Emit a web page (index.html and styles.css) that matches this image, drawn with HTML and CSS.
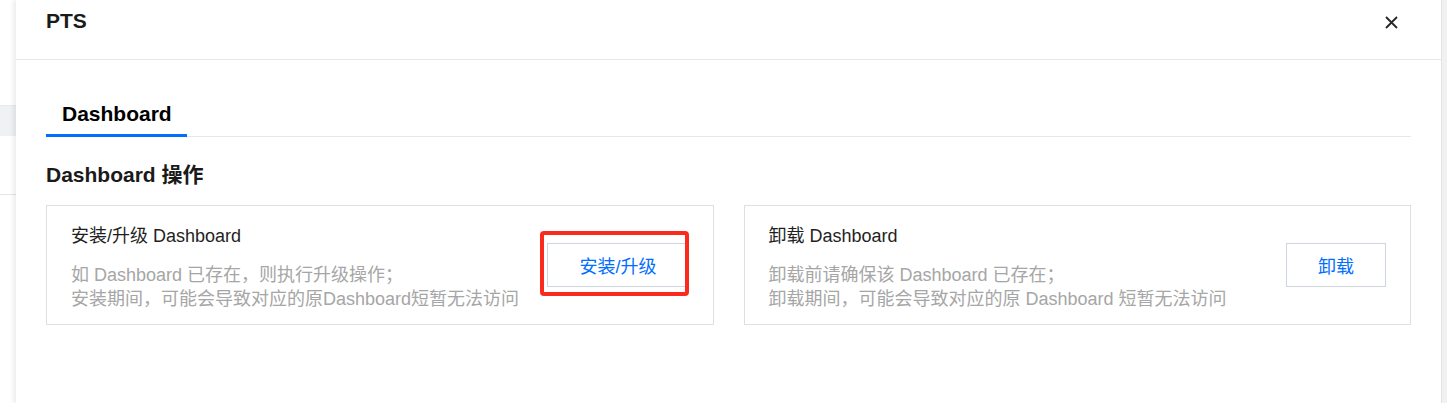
FILE: index.html
```html
<!DOCTYPE html>
<html lang="zh-CN">
<head>
  <meta charset="UTF-8">
  <meta name="viewport" content="width=device-width, initial-scale=1.0">
  <title>PTS - Dashboard</title>
  <link rel="stylesheet" href="styles.css">
</head>
<body>

  <!-- page behind the dialog -->
  <div class="page-edge">
    <div class="edge-band"></div>
    <div class="edge-line"></div>
  </div>

  <div class="dialog">
    <!-- Header -->
    <header class="dialog-header">
      <h3>PTS</h3>
      <button class="close-btn" aria-label="关闭">
        <svg width="13" height="13" viewBox="0 0 13 13">
          <path d="M1 1 L12 12 M12 1 L1 12" stroke="#262626" stroke-width="1.8" fill="none"/>
        </svg>
      </button>
    </header>

    <div class="dialog-body">
      <div class="tabs">
        <div class="tab active">Dashboard</div>
      </div>

      <h4 class="section-title">Dashboard 操作</h4>

      <div class="cards">
        <div class="card">
          <div class="card-text">
            <div class="card-title">安装/升级 Dashboard</div>
            <p class="card-desc">如 Dashboard 已存在，则执行升级操作；<br>安装期间，可能会导致对应的原Dashboard短暂无法访问</p>
          </div>
          <div class="btn-wrap">
            <button class="btn">安装/升级</button>
            <span class="highlight"></span>
          </div>
        </div>

        <div class="card">
          <div class="card-text">
            <div class="card-title">卸载 Dashboard</div>
            <p class="card-desc">卸载前请确保该 Dashboard 已存在；<br>卸载期间，可能会导致对应的原 Dashboard 短暂无法访问</p>
          </div>
          <div class="btn-wrap">
            <button class="btn">卸载</button>
          </div>
        </div>
      </div>
    </div>
  </div>

  <div class="scroll-track"></div>

</body>
</html>
```

FILE: styles.css
```css
body {
  margin: 0;
  height: 403px;
  overflow: hidden;
  display: flex;
  font-family: "Liberation Sans", Arial, "Noto Sans CJK SC", sans-serif;
  background: #fff;
  color: rgba(0, 0, 0, 0.9);
}

/* strip of the page behind the dialog */
.page-edge {
  width: 16px;
  flex-shrink: 0;
  padding-top: 105px;
}

.edge-band {
  height: 31px;
  background: #eff1f5;
  border-top: 1px solid #e8eaef;
  box-sizing: border-box;
}

.edge-line {
  margin-top: 58px;
  height: 1px;
  background: #e3e5ea;
}

.dialog {
  flex: 1;
  background: #fff;
  box-shadow: -3px 0 4px rgba(0, 0, 0, 0.07);
  position: relative;
}

.dialog-header {
  height: 60px;
  box-sizing: border-box;
  padding: 9px 43px 0 30px;
  display: flex;
  justify-content: space-between;
  align-items: flex-start;
  border-bottom: 1px solid #e7e7e7;
}

.dialog-header h3 {
  margin: 0;
  font-size: 21px;
  line-height: 24px;
  font-weight: bold;
  color: #1a1a1a;
}

.close-btn {
  border: none;
  background: none;
  padding: 0;
  margin-top: 7px;
  width: 13px;
  height: 13px;
  display: flex;
  cursor: pointer;
}

.dialog-body {
  padding: 34px 30px 0;
}

.tabs {
  display: flex;
  border-bottom: 1px solid #e7e7e7;
}

.tab {
  padding: 8px 15px 8px 16px;
  font-size: 21px;
  line-height: 24px;
  font-weight: bold;
  color: #000;
  margin-bottom: -1px;
  border-bottom: 3px solid transparent;
}

.tab.active {
  border-bottom-color: #006eff;
}

.section-title {
  margin: 26px 0 18px;
  font-size: 21px;
  line-height: 24px;
  font-weight: bold;
  color: #1a1a1a;
}

.cards {
  display: grid;
  grid-template-columns: 1fr 1fr;
  gap: 30px;
}

.card {
  border: 1px solid #dcdfe6;
  padding: 18px 24px 13px 24px;
  display: flex;
  justify-content: space-between;
  align-items: center;
}

.card-title {
  font-size: 18px;
  line-height: 24px;
  color: #1f1f1f;
  margin-bottom: 15px;
}

.card-desc {
  margin: 0;
  font-size: 18px;
  line-height: 24px;
  color: #a6a6a6;
}

.btn-wrap {
  position: relative;
  display: flex;
  margin-bottom: 5px;
}

.btn {
  height: 44px;
  padding: 0 31px;
  border: 1px solid #cfd5de;
  background: #fff;
  color: #006eff;
  font-family: "Liberation Sans", Arial, "Noto Sans CJK SC", sans-serif;
  font-size: 18px;
  cursor: pointer;
}

/* red annotation box drawn over the install button */
.highlight {
  position: absolute;
  left: -7px;
  top: -12px;
  right: 0;
  bottom: -9px;
  border: 4px solid #fb2a1f;
  border-radius: 4px;
  pointer-events: none;
}

.scroll-track {
  width: 6px;
  flex-shrink: 0;
  background: #f1f1f1;
  border-left: 1px solid #e2e2e2;
  box-sizing: border-box;
}
```
